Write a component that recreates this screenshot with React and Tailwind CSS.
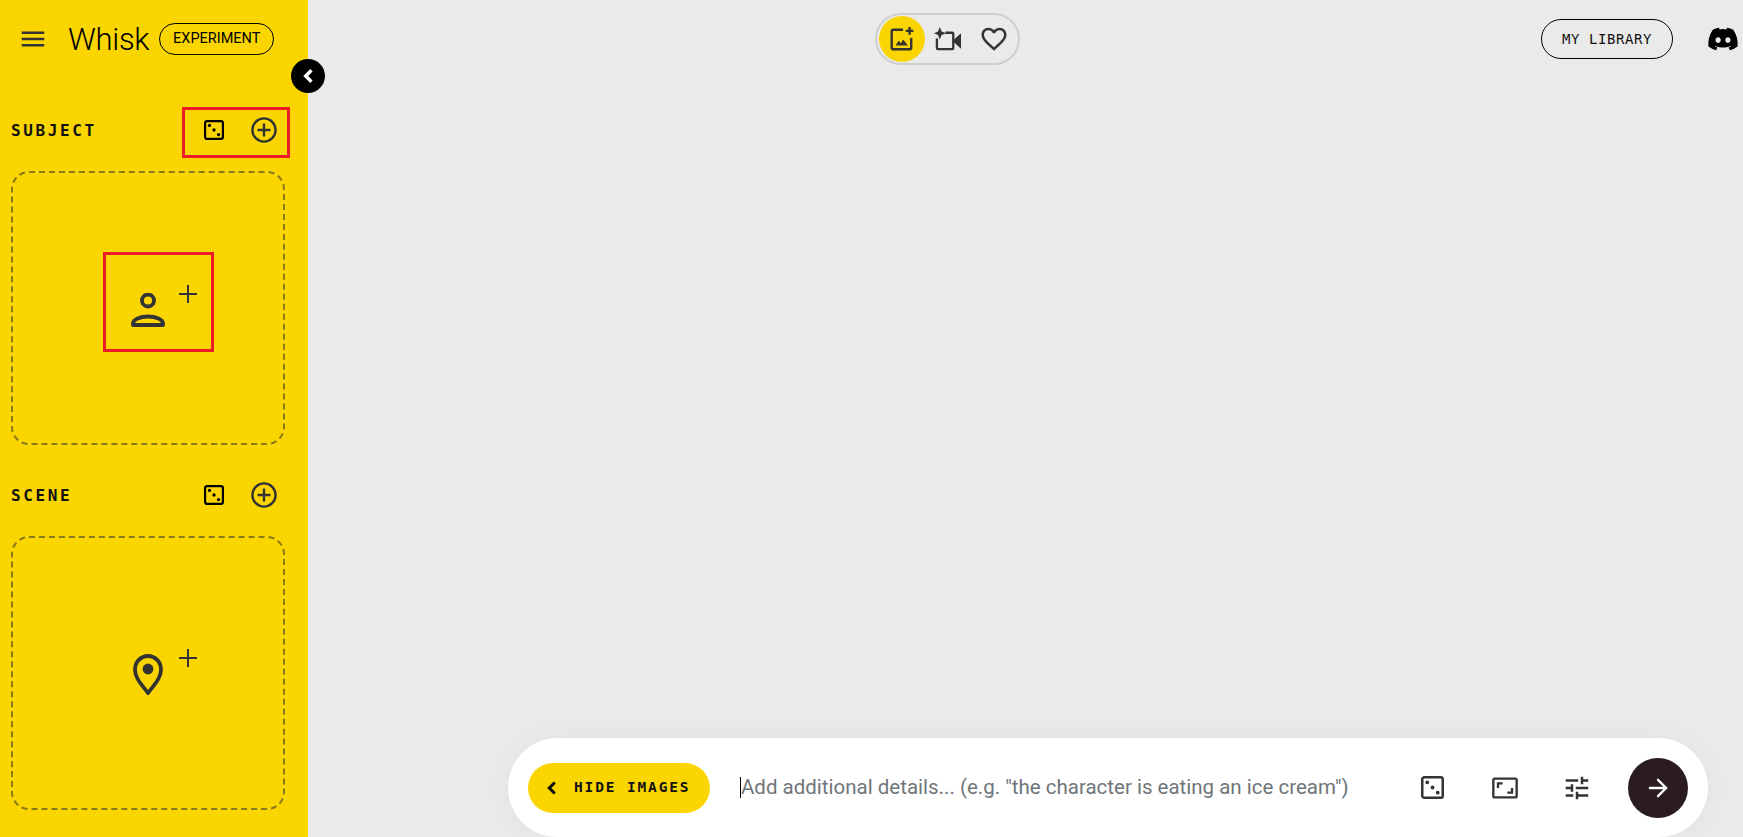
import React from 'react';
import { ArrowRight } from 'lucide-react';
import { FaDiscord } from 'react-icons/fa6';

const Dice = ({ className }) => (
  <svg viewBox="0 0 22 22" className={className} fill="none">
    <rect x="1.2" y="1.2" width="19.6" height="19.6" rx="2" stroke="currentColor" strokeWidth="2.4" />
    <circle cx="6" cy="6" r="1.8" fill="currentColor" />
    <circle cx="11" cy="11" r="1.8" fill="currentColor" />
    <circle cx="16" cy="16" r="1.8" fill="currentColor" />
  </svg>
);

const PlusCircle = () => (
  <svg viewBox="0 0 26 26" className="w-[26px] h-[26px] text-[#333]" fill="none" stroke="currentColor" strokeWidth="2.4">
    <circle cx="13" cy="13" r="11.6" />
    <path d="M13 6.5v13M6.5 13h13" />
  </svg>
);

const Plus = () => (
  <svg viewBox="0 0 18 18" className="w-[18px] h-[18px] text-[#333]" fill="none" stroke="currentColor" strokeWidth="2">
    <path d="M9 0v18M0 9h18" />
  </svg>
);

const Person = () => (
  <svg viewBox="0 0 34 34" className="w-[34px] h-[34px] text-[#333]" fill="none" stroke="currentColor" strokeWidth="3.8">
    <circle cx="17" cy="7.5" r="6" />
    <path d="M2 32v-1.4c0-4 7-7.100 15-7.100s15 3.100 15 7.100V32z" strokeLinejoin="round" />
  </svg>
);

const Pin = () => (
  <svg viewBox="0 0 30 42" className="w-[30px] h-[42px] text-[#333]" fill="none">
    <path d="M15 39C8 30 2 24 2 15.500 2 8 7.800 2 15 2s13 6 13 13.500C28 24 22 30 15 39z" stroke="currentColor" strokeWidth="3.800" strokeLinejoin="round" />
    <circle cx="15" cy="15" r="5.400" fill="currentColor" />
  </svg>
);

const Row = ({ label }) => (
  <div className="flex items-center justify-between h-[50px] w-[278px]">
    <span className="mt-[1px] font-['DejaVu_Sans_Mono',monospace] font-bold text-[16px] tracking-[2.600px] text-[#111]">{label}</span>
    <div className="flex">
      <button className="w-[50px] h-[50px] flex items-center justify-center text-black">
        <Dice className="w-[20px] h-[20px]" />
      </button>
      <button className="w-[50px] h-[50px] flex items-center justify-center">
        <PlusCircle />
      </button>
    </div>
  </div>
);

const DropCard = ({ children }) => (
  <div className="relative w-[274px] h-[274px] mt-[16px] rounded-[18px] border-2 border-dashed border-[#8a7a1a] flex items-center justify-center">
    <div className="relative w-[34px] h-[41px] flex items-center justify-center">
      {children}
    </div>
  </div>
);

export default function App() {
  return (
    <div className="flex h-screen overflow-hidden bg-[#eaeaea] font-['Roboto',sans-serif]">
      <aside className="relative w-[308px] shrink-0 bg-[#fad500] pl-[11px]">
        <div className="flex items-center h-[78px]">
          <svg viewBox="0 0 24 24" className="w-[30px] h-[30px] ml-[7px] text-[#333]" fill="currentColor">
            <path d="M3 18h18v-2H3v2zm0-5h18v-2H3v2zm0-7v2h18V6H3z" />
          </svg>
          <span className="ml-[20px] text-[31px] leading-none font-light text-black tracking-[-0.3px]">Whisk</span>
          <span className="ml-[10px] w-[115px] h-[32px] rounded-full border border-black flex items-center justify-center text-[14.500px] text-black">EXPERIMENT</span>
        </div>

        <button className="absolute left-[291px] top-[59px] w-[34px] h-[34px] rounded-full bg-black flex items-center justify-center z-10">
          <svg viewBox="0 0 12 14" className="w-[14px] h-[16px]" fill="none" stroke="white" strokeWidth="3">
            <path d="M9 2 4 7l5 5" />
          </svg>
        </button>

        <div className="mt-[27px]">
          <Row label="SUBJECT" />
        </div>
        <div className="absolute left-[182px] top-[107px] w-[108px] h-[51px] border-[3px] border-[#ee1c25]" />
        <DropCard>
          <div className="mt-[3px]"><Person /></div>
          <div className="absolute left-[48px] top-[-3px]"><Plus /></div>
          <div className="absolute left-[-28px] top-[-36px] w-[111px] h-[100px] border-[3px] border-[#ee1c25]" />
        </DropCard>

        <div className="mt-[25px]">
          <Row label="SCENE" />
        </div>
        <DropCard>
          <div className="mt-[3px]"><Pin /></div>
          <div className="absolute left-[48px] top-[-4px]"><Plus /></div>
        </DropCard>
      </aside>

      <main className="flex-1 flex flex-col justify-between min-w-0">
        <header className="relative flex items-start h-[78px]">
          <nav className="ml-[567px] mt-[13px] w-[145px] h-[52px] rounded-full border-2 border-[#cfcfcf] flex items-center pl-[2px] text-[#333]">
            <div className="w-[46px] h-[46px] rounded-full bg-[#fad500] flex items-center justify-center">
              <svg viewBox="0 0 24 24" className="w-[26px] h-[26px]" fill="none" stroke="currentColor" strokeWidth="2.200">
                <path d="M13 3.500H4a1.500 1.500 0 0 0-1.500 1.500v15A1.500 1.500 0 0 0 4 21.500h15a1.500 1.500 0 0 0 1.500-1.500v-9" />
                <path d="M19 1v7M15.500 4.500h7" />
                <path d="M6 18l3-4.500 2 2.500 2-3.500 4.500 5.500z" fill="currentColor" stroke="none" />
              </svg>
            </div>
            <div className="ml-[2px] w-[40px] h-[40px] flex items-center justify-center">
              <svg viewBox="0 0 28 26" className="w-[27px] h-[25px]" fill="none" stroke="currentColor" strokeWidth="2.400">
                <path d="M12 6h7a1 1 0 0 1 1 1v15a1 1 0 0 1-1 1H4a1 1 0 0 1-1-1V12" />
                <path d="M21 14.500l6-5.500v11z" fill="currentColor" />
                <path d="M6 0l1.900 4.600L13 6.500 7.900 8.400 6 13 4.100 8.400 0 6.500l4.100-1.900z" fill="currentColor" stroke="none" />
              </svg>
            </div>
            <div className="ml-[7px] w-[40px] h-[40px] flex items-center justify-center">
              <svg viewBox="0 0 24 24" className="w-[30px] h-[30px]" fill="currentColor">
                <path d="M16.500 3c-1.740 0-3.410.810-4.500 2.090C10.910 3.810 9.240 3 7.500 3 4.420 3 2 5.420 2 8.500c0 3.780 3.400 6.860 8.550 11.540L12 21.350l1.450-1.320C18.600 15.360 22 12.280 22 8.500 22 5.420 19.580 3 16.500 3zm-4.400 15.550l-.1.1-.1-.1C7.140 14.240 4 11.390 4 8.500 4 6.500 5.500 5 7.500 5c1.540 0 3.040.990 3.570 2.360h1.870C13.460 5.990 14.960 5 16.500 5c2 0 3.500 1.500 3.500 3.500 0 2.890-3.140 5.740-7.900 10.050z" />
              </svg>
            </div>
          </nav>
          <button className="absolute left-[1233px] top-[19px] w-[132px] h-[40px] rounded-full border border-black font-['DejaVu_Sans_Mono',monospace] text-[14px] tracking-[0.550px] text-[#111]">MY LIBRARY</button>
          <FaDiscord className="absolute left-[1399px] top-[24px] w-[32px] h-[30px] text-black" />
        </header>

        <div className="ml-[200px] w-[1200px] h-[99px] rounded-[50px] bg-white shadow-[0_0_30px_rgba(0,0,0,0.04)] flex items-center pl-5 pr-5">
          <button className="w-[182px] h-[50px] rounded-full bg-[#fad500] flex items-center pl-[18px] text-[#111]">
            <svg viewBox="0 0 10 14" className="w-[11px] h-[16px]" fill="none" stroke="currentColor" strokeWidth="2.800">
              <path d="M8 2 3 7l5 5" />
            </svg>
            <span className="ml-[17px] mt-[1px] font-['DejaVu_Sans_Mono',monospace] font-bold text-[14.500px] tracking-[1.850px]">HIDE IMAGES</span>
          </button>
          <div className="ml-[30px] flex-1 flex items-center">
            <span className="w-px h-[21px] bg-black" />
            <span className="text-[20.500px] text-[#70757a]">Add additional details... (e.g. "the character is eating an ice cream")</span>
          </div>
          <Dice className="w-[23px] h-[23px] text-[#333]" />
          <svg viewBox="0 0 24 24" className="ml-[47px] w-[28px] h-[28px] text-[#333]" fill="currentColor">
            <path d="M19 12h-2v3h-3v2h5v-5zM7 9h3V7H5v5h2V9zm14-6H3c-1.100 0-2 .9-2 2v14c0 1.100.9 2 2 2h18c1.100 0 2-.9 2-2V5c0-1.100-.9-2-2-2zm0 16.010H3V4.990h18v14.020z" />
          </svg>
          <svg viewBox="0 0 24 24" className="ml-[43px] w-[30px] h-[30px] text-[#333]" fill="currentColor">
            <path d="M3 17v2h6v-2H3zM3 5v2h10V5H3zm10 16v-2h8v-2h-8v-2h-2v6h2zM7 9v2H3v2h4v2h2V9H7zm14 4v-2H11v2h10zm-6-4h2V7h4V5h-4V3h-2v6z" />
          </svg>
          <button className="ml-[36px] w-[60px] h-[60px] rounded-full bg-[#2b1b23] flex items-center justify-center">
            <ArrowRight className="w-[28px] h-[28px] text-white" strokeWidth={2} />
          </button>
        </div>
      </main>
    </div>
  );
}
